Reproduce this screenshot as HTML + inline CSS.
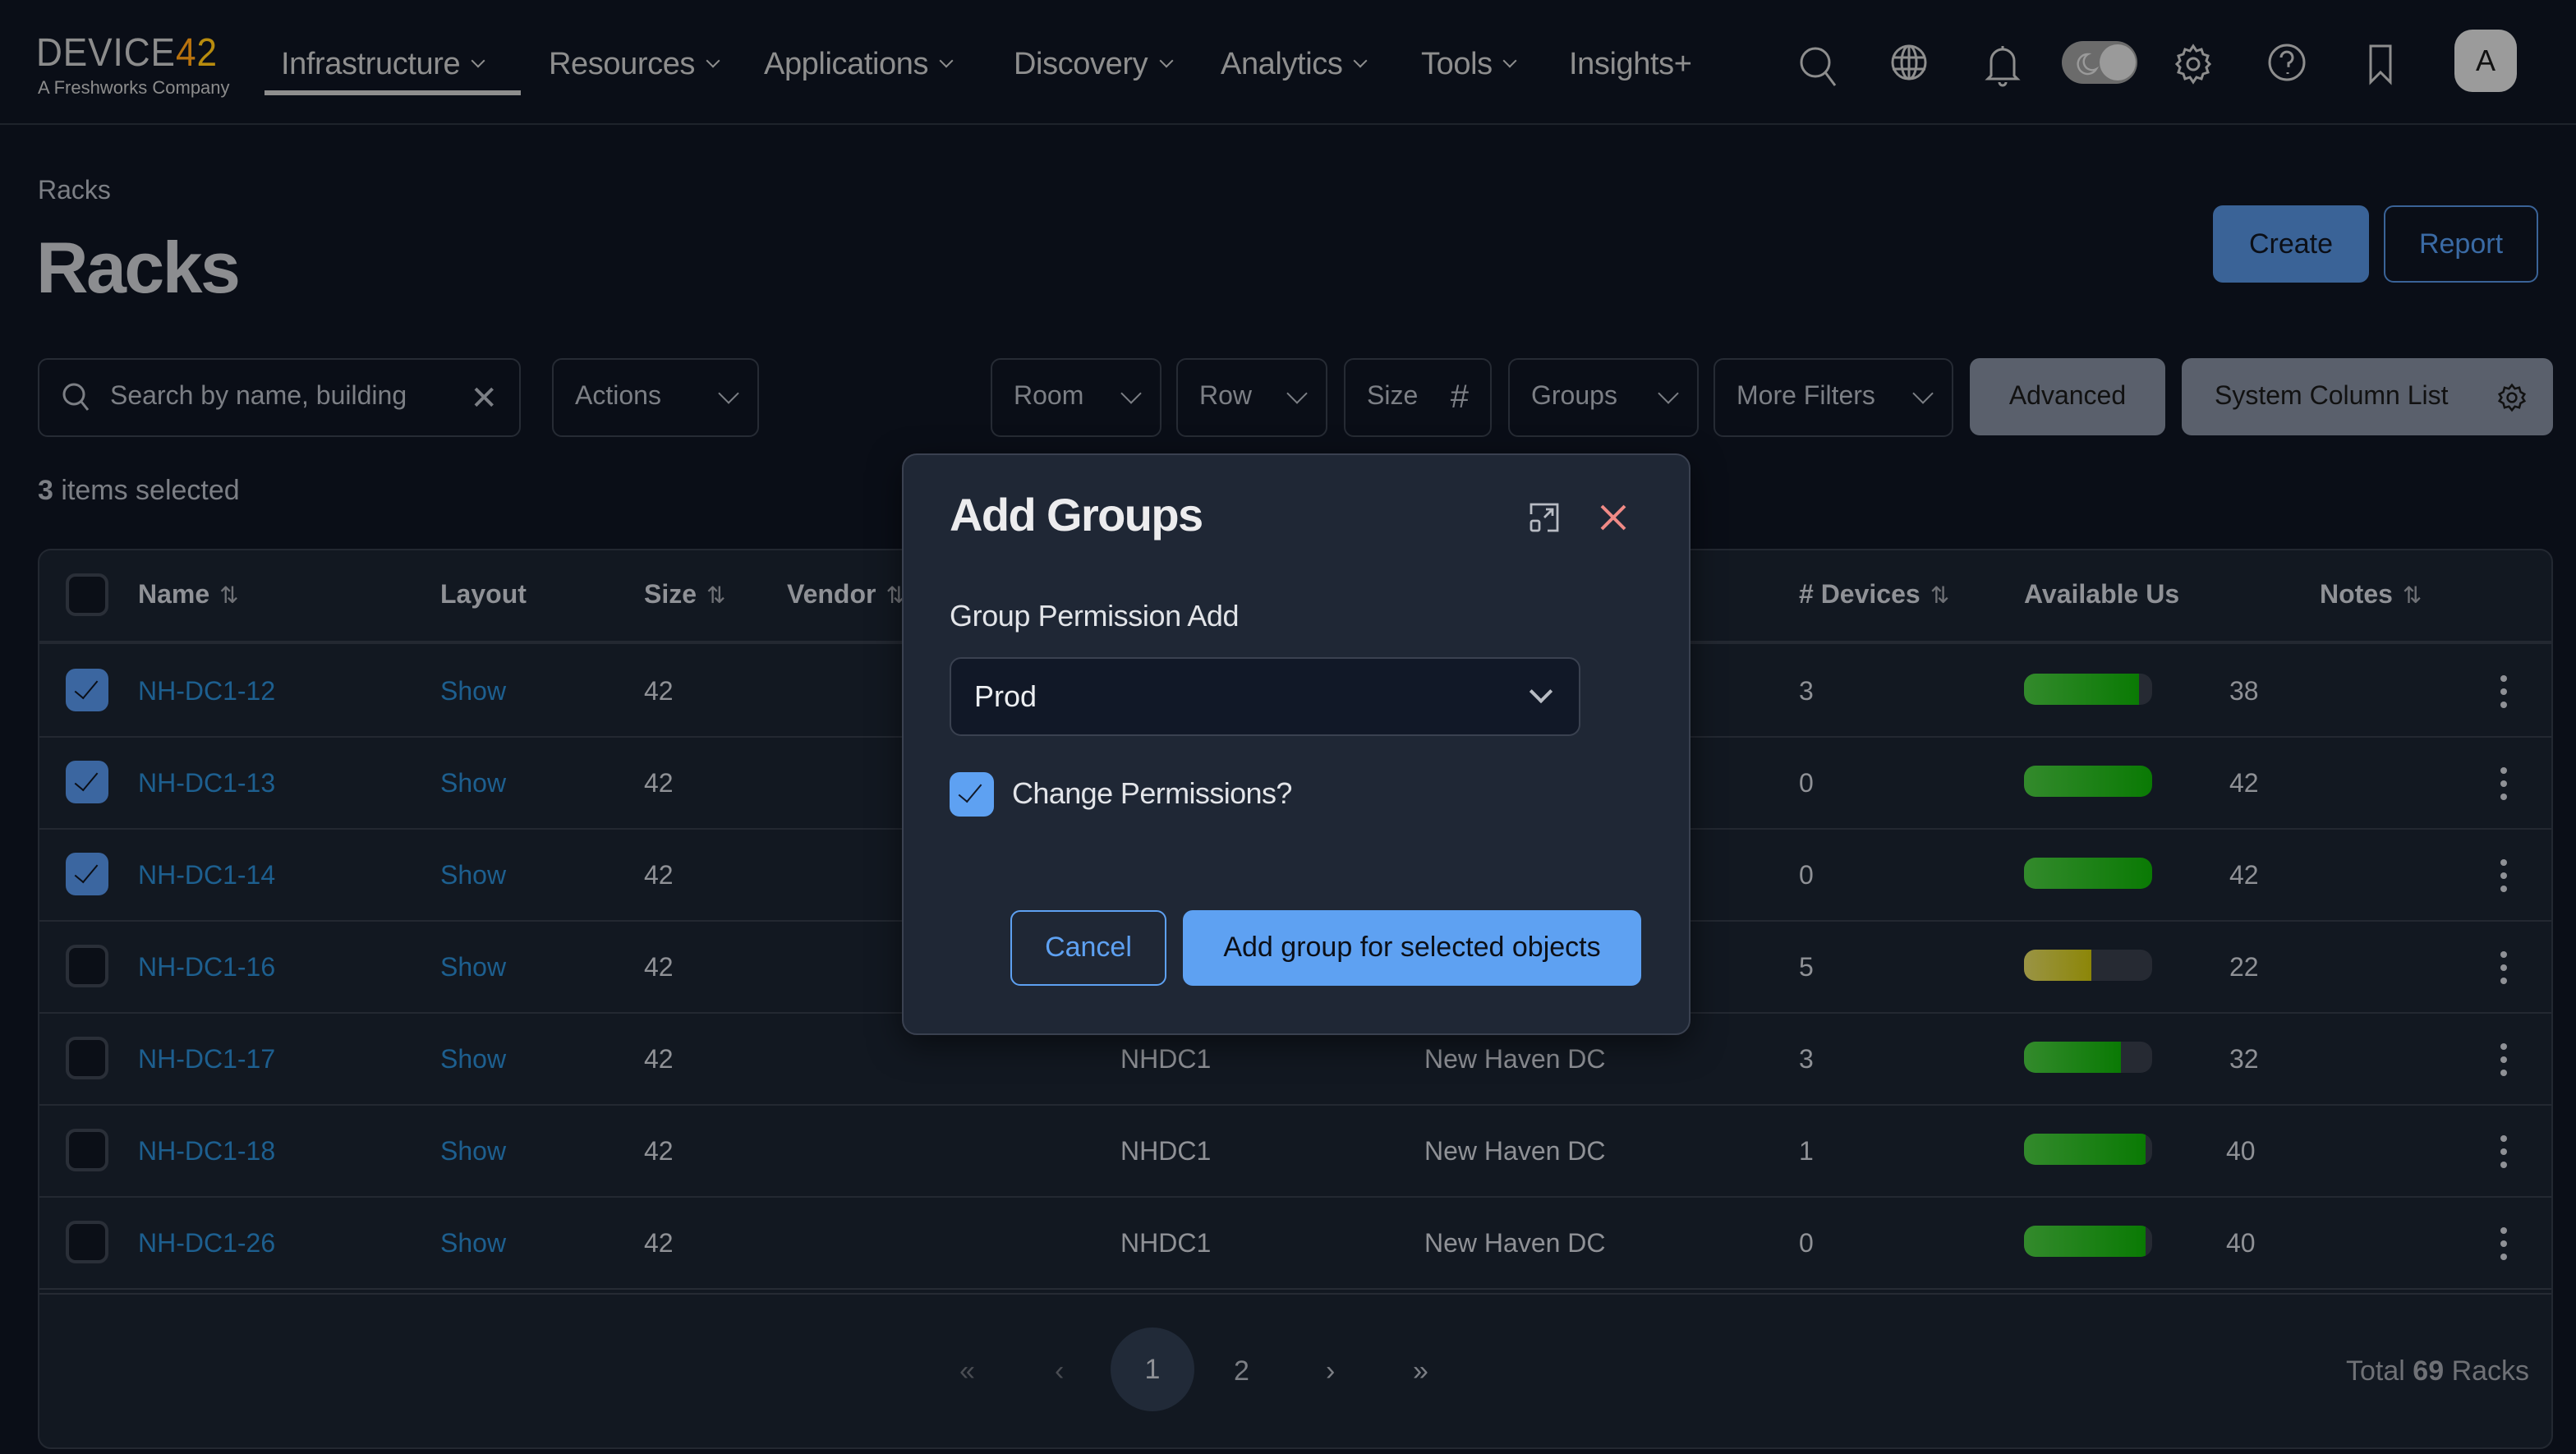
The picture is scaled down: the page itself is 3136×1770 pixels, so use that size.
<!DOCTYPE html>
<html><head><meta charset="utf-8"><style>
*{box-sizing:border-box;margin:0;padding:0}
html,body{width:3136px;height:1770px;overflow:hidden;background:#0a0e17}
#w{position:absolute;left:0;top:0;width:1568px;height:885px;transform:scale(2);transform-origin:0 0;font-family:"Liberation Sans",sans-serif;color:#8f9196;background:#0a0e17}
.a{position:absolute}
.nav{font-size:19px;color:#8e8e8e;top:29px;letter-spacing:-0.2px}
.chev{display:inline-block;width:6px;height:6px;border-right:1.4px solid #8e8e8e;border-bottom:1.4px solid #8e8e8e;transform:rotate(45deg);margin-left:8px;position:relative;top:-5px}
.box{border:1px solid #262b34;border-radius:6px;height:48px;top:218px;font-size:16px;color:#7c7f85;display:flex;align-items:center;padding:0 13px;justify-content:space-between}
.dchev{width:9px;height:9px;border-right:1.6px solid #7c7f85;border-bottom:1.6px solid #7c7f85;transform:rotate(45deg);margin-top:-6px}
.gbtn{background:#5a606c;border-radius:6px;top:218px;height:47px;color:#111;font-size:16px;display:flex;align-items:center;justify-content:center}
.row{left:24px;width:1529px;height:56px;border-top:1.5px solid #232831}
.cb{width:26px;height:26px;border-radius:6px;border:2px solid #2a2f38;background:#0b0f17;left:40px}
.cb.on{background:#3b66a0;border:none}
.cb.on:after{content:"";position:absolute;left:9px;top:4px;width:6px;height:13px;border-right:1.6px solid #0b0f17;border-bottom:1.6px solid #0b0f17;transform:rotate(40deg)}
.t{font-size:16px;color:#8f9196;margin-top:2px}
.lnk{font-size:16px;color:#1d5f8f;margin-top:2px}
.bar{width:78px;height:19px;border-radius:7px;background:#262a33;overflow:hidden;left:1232px}
.bar i{display:block;height:100%;background:linear-gradient(90deg,#338a2c,#0a7a04)}
.bar i.y{background:linear-gradient(90deg,#9a9445,#8c8608)}
.dots{left:1522px;width:4px}
.dots b{display:block;width:4px;height:4px;border-radius:50%;background:#8f9196;margin-bottom:4px}
.hd{font-size:16px;color:#8f9196;font-weight:bold;top:354px}
.sort{font-weight:normal;font-size:14px;color:#6f7176;margin-left:6px}
</style></head><body><div id="w">
<div class="a" style="left:0;top:0;width:1568px;height:76px;border-bottom:1px solid #1e232b"></div>
<div class="a" style="left:22px;top:19px;font-size:24px;letter-spacing:0.5px;color:#8c8c8c;line-height:28px;transform:scaleX(0.92);transform-origin:0 0">DEVICE<span style="color:#b8720e">4</span><span style="color:#b88c0e">2</span></div>
<div class="a" style="left:23px;top:48px;font-size:11px;color:#8c8c8c">A Freshworks Company</div>
<div class="a nav" style="left:171px">Infrastructure<span class="chev"></span></div>
<div class="a" style="left:161px;top:55px;width:156px;height:3px;background:#8e8e8e"></div>
<div class="a nav" style="left:334px">Resources<span class="chev"></span></div>
<div class="a nav" style="left:465px">Applications<span class="chev"></span></div>
<div class="a nav" style="left:617px">Discovery<span class="chev"></span></div>
<div class="a nav" style="left:743px">Analytics<span class="chev"></span></div>
<div class="a nav" style="left:865px">Tools<span class="chev"></span></div>
<div class="a nav" style="left:955px">Insights+</div>
<svg class="a" style="left:1090px;top:24px" width="460" height="34" viewBox="0 0 460 34" fill="none" stroke="#8e8e8e" stroke-width="1.5">
 <circle cx="15" cy="14" r="8.5"/><path d="M21 20l6 8"/>
 <circle cx="72" cy="14" r="10"/><ellipse cx="72" cy="14" rx="4.5" ry="10"/><path d="M62 11h20M62 18h20M72 4v20"/>
 <path d="M122 22V13a7 7 0 0 1 14 0v9l2 2h-18z"/><path d="M129 4v2M127 26a2 2 0 0 0 4 0"/>
 <rect x="165" y="1" width="46" height="26" rx="13" fill="#6b6b6b" stroke="none"/><circle cx="199" cy="14" r="11" fill="#9a9a9a" stroke="none"/>
 <path d="M181 9a6 6 0 1 0 5 9a5 5 0 0 1-5-9z" stroke="#9a9a9a" stroke-width="1.2"/>
 <circle cx="245" cy="15" r="3.5"/><path d="M245 4l2 3 3-1 1 3 3 1-1 3 2 2-2 2 1 3-3 1-1 3-3-1-2 3-2-3-3 1-1-3-3-1 1-3-2-2 2-2-1-3 3-1 1-3 3 1z"/>
 <circle cx="302" cy="14" r="10.5"/><path d="M298.5 11a3.5 3.5 0 1 1 4.5 3.4v2.5M302.5 20v1"/>
 <path d="M353 4h12v22l-6-6-6 6z"/>
</svg>
<div class="a" style="left:1494px;top:18px;width:38px;height:38px;border-radius:11px;background:#9b9b9b;color:#111;font-size:18px;display:flex;align-items:center;justify-content:center">A</div>

<div class="a" style="left:23px;top:108px;font-size:16px;color:#7c7f85">Racks</div>
<div class="a" style="left:22px;top:139px;font-size:44px;font-weight:bold;color:#8c8d90;letter-spacing:-1.3px">Racks</div>
<div class="a" style="left:1347px;top:125px;width:95px;height:47px;border-radius:6px;background:#3a6397;color:#0b0f17;font-size:17px;display:flex;align-items:center;justify-content:center">Create</div>
<div class="a" style="left:1451px;top:125px;width:94px;height:47px;border-radius:6px;border:1.5px solid #3a6397;color:#3a6aa4;font-size:17px;display:flex;align-items:center;justify-content:center">Report</div>

<div class="a box" style="left:23px;width:294px"><span style="display:flex;align-items:center"><svg width="20" height="20" viewBox="0 0 20 20" fill="none" stroke="#7c7f85" stroke-width="1.5"><circle cx="8" cy="8" r="6"/><path d="M12.5 12.5l4 5"/></svg><span style="margin-left:10px">Search by name, building</span></span><span style="font-size:20px">✕</span></div>
<div class="a box" style="left:336px;width:126px">Actions<span class="dchev"></span></div>
<div class="a box" style="left:603px;width:104px">Room<span class="dchev"></span></div>
<div class="a box" style="left:716px;width:92px">Row<span class="dchev"></span></div>
<div class="a box" style="left:818px;width:90px">Size<span style="font-size:20px">#</span></div>
<div class="a box" style="left:918px;width:116px">Groups<span class="dchev"></span></div>
<div class="a box" style="left:1043px;width:146px">More Filters<span class="dchev"></span></div>
<div class="a gbtn" style="left:1199px;width:119px">Advanced</div>
<div class="a gbtn" style="left:1328px;width:226px;justify-content:space-between;padding:0 16px 0 20px">System Column List<svg width="18" height="18" viewBox="0 0 20 20" fill="none" stroke="#111" stroke-width="1.4"><circle cx="10" cy="10" r="3"/><path d="M10 1.5l2 2.5 3-.8.8 3 2.7 1.5-1.5 2.3 1.5 2.3-2.7 1.5-.8 3-3-.8-2 2.5-2-2.5-3 .8-.8-3L1.5 12.3 3 10 1.5 7.7 4.2 6.2l.8-3 3 .8z"/></svg></div>
<div class="a" style="left:23px;top:289px;font-size:17px;color:#7c7f85"><b>3</b> items selected</div>

<div class="a" style="left:23px;top:334px;width:1531px;height:548px;background:#121821;border:1px solid #232831;border-radius:8px"></div>
<div class="a cb" style="top:349px"></div>
<div class="a hd" style="left:84px">Name<span class="sort">⇅</span></div>
<div class="a hd" style="left:268px">Layout</div>
<div class="a hd" style="left:392px">Size<span class="sort">⇅</span></div>
<div class="a hd" style="left:479px">Vendor<span class="sort">⇅</span></div>
<div class="a hd" style="left:1095px"># Devices<span class="sort">⇅</span></div>
<div class="a hd" style="left:1232px">Available Us</div>
<div class="a hd" style="left:1412px">Notes<span class="sort">⇅</span></div>
<div class="a" style="left:24px;top:390px;width:1529px;height:2px;background:#232831"></div>

<div class="a row" style="top:448px"></div><div class="a row" style="top:504px"></div><div class="a row" style="top:560px"></div><div class="a row" style="top:616px"></div><div class="a row" style="top:672px"></div><div class="a row" style="top:728px"></div>
<div class="a" style="left:24px;top:784px;width:1529px;height:4px;border-top:1.5px solid #262b34;border-bottom:1.5px solid #262b34"></div>

<div class="a cb on" style="top:407px"></div><div class="a lnk" style="left:84px;top:411px">NH-DC1-12</div><div class="a lnk" style="left:268px;top:411px">Show</div><div class="a t" style="left:392px;top:411px">42</div><div class="a t" style="left:1095px;top:411px">3</div><div class="a bar" style="top:410px"><i style="width:70px"></i></div><div class="a t" style="left:1357px;top:411px">38</div><div class="a dots" style="top:411px"><b></b><b></b><b></b></div>
<div class="a cb on" style="top:463px"></div><div class="a lnk" style="left:84px;top:467px">NH-DC1-13</div><div class="a lnk" style="left:268px;top:467px">Show</div><div class="a t" style="left:392px;top:467px">42</div><div class="a t" style="left:1095px;top:467px">0</div><div class="a bar" style="top:466px"><i style="width:78px"></i></div><div class="a t" style="left:1357px;top:467px">42</div><div class="a dots" style="top:467px"><b></b><b></b><b></b></div>
<div class="a cb on" style="top:519px"></div><div class="a lnk" style="left:84px;top:523px">NH-DC1-14</div><div class="a lnk" style="left:268px;top:523px">Show</div><div class="a t" style="left:392px;top:523px">42</div><div class="a t" style="left:1095px;top:523px">0</div><div class="a bar" style="top:522px"><i style="width:78px"></i></div><div class="a t" style="left:1357px;top:523px">42</div><div class="a dots" style="top:523px"><b></b><b></b><b></b></div>
<div class="a cb" style="top:575px"></div><div class="a lnk" style="left:84px;top:579px">NH-DC1-16</div><div class="a lnk" style="left:268px;top:579px">Show</div><div class="a t" style="left:392px;top:579px">42</div><div class="a t" style="left:1095px;top:579px">5</div><div class="a bar" style="top:578px"><i class="y" style="width:41px"></i></div><div class="a t" style="left:1357px;top:579px">22</div><div class="a dots" style="top:579px"><b></b><b></b><b></b></div>
<div class="a cb" style="top:631px"></div><div class="a lnk" style="left:84px;top:635px">NH-DC1-17</div><div class="a lnk" style="left:268px;top:635px">Show</div><div class="a t" style="left:392px;top:635px">42</div><div class="a t" style="left:682px;top:635px">NHDC1</div><div class="a t" style="left:867px;top:635px">New Haven DC</div><div class="a t" style="left:1095px;top:635px">3</div><div class="a bar" style="top:634px"><i style="width:59px"></i></div><div class="a t" style="left:1357px;top:635px">32</div><div class="a dots" style="top:635px"><b></b><b></b><b></b></div>
<div class="a cb" style="top:687px"></div><div class="a lnk" style="left:84px;top:691px">NH-DC1-18</div><div class="a lnk" style="left:268px;top:691px">Show</div><div class="a t" style="left:392px;top:691px">42</div><div class="a t" style="left:682px;top:691px">NHDC1</div><div class="a t" style="left:867px;top:691px">New Haven DC</div><div class="a t" style="left:1095px;top:691px">1</div><div class="a bar" style="top:690px"><i style="width:74px"></i></div><div class="a t" style="left:1355px;top:691px">40</div><div class="a dots" style="top:691px"><b></b><b></b><b></b></div>
<div class="a cb" style="top:743px"></div><div class="a lnk" style="left:84px;top:747px">NH-DC1-26</div><div class="a lnk" style="left:268px;top:747px">Show</div><div class="a t" style="left:392px;top:747px">42</div><div class="a t" style="left:682px;top:747px">NHDC1</div><div class="a t" style="left:867px;top:747px">New Haven DC</div><div class="a t" style="left:1095px;top:747px">0</div><div class="a bar" style="top:746px"><i style="width:74px"></i></div><div class="a t" style="left:1355px;top:747px">40</div><div class="a dots" style="top:747px"><b></b><b></b><b></b></div>

<div class="a" style="left:584px;top:825px;font-size:17px;color:#4a4d53">«</div>
<div class="a" style="left:642px;top:825px;font-size:17px;color:#4a4d53">‹</div>
<div class="a" style="left:676px;top:808px;width:51px;height:51px;border-radius:50%;background:#212a38;color:#8f9196;font-size:17px;display:flex;align-items:center;justify-content:center">1</div>
<div class="a" style="left:751px;top:825px;font-size:17px;color:#7c7f85">2</div>
<div class="a" style="left:807px;top:825px;font-size:17px;color:#7c7f85">›</div>
<div class="a" style="left:860px;top:825px;font-size:17px;color:#7c7f85">»</div>
<div class="a" style="left:1428px;top:825px;font-size:17px;color:#6f7176">Total <b>69</b> Racks</div>

<div class="a" style="left:549px;top:276px;width:480px;height:354px;background:#1f2735;border:1px solid #3a4150;border-radius:9px;box-shadow:0 6px 20px rgba(0,0,0,.5)"></div>
<div class="a" style="left:578px;top:298px;font-size:28px;font-weight:bold;color:#ececee;letter-spacing:-0.8px">Add Groups</div>
<svg class="a" style="left:929px;top:304px" width="22" height="22" viewBox="0 0 22 22" fill="none" stroke="#b8bcc4" stroke-width="1.4"><path d="M3 9V3h16v16h-6"/><rect x="3" y="13" width="5" height="6" rx="1"/><path d="M11 11l5-5M12 6h4v4"/></svg>
<svg class="a" style="left:972px;top:305px" width="20" height="20" viewBox="0 0 20 20" stroke="#f08a86" stroke-width="2"><path d="M3 3l14 14M17 3L3 17"/></svg>
<div class="a" style="left:578px;top:365px;font-size:18px;color:#e2e4e8;letter-spacing:-0.2px">Group Permission Add</div>
<div class="a" style="left:578px;top:400px;width:384px;height:48px;background:#111827;border:1.5px solid #3a4150;border-radius:7px;padding:0 14px;display:flex;align-items:center;justify-content:space-between;font-size:18px;color:#eceef1">Prod<span style="width:10px;height:10px;border-right:2px solid #b8bcc4;border-bottom:2px solid #b8bcc4;transform:rotate(45deg);margin-top:-6px;margin-right:4px"></span></div>
<div class="a" style="left:578px;top:470px;width:27px;height:27px;border-radius:6px;background:#5ea1f2"></div>
<div class="a" style="left:587px;top:474px;width:7px;height:14px;border-right:1.8px solid #111827;border-bottom:1.8px solid #111827;transform:rotate(40deg)"></div>
<div class="a" style="left:616px;top:473px;font-size:18px;color:#e2e4e8;letter-spacing:-0.3px">Change Permissions?</div>
<div class="a" style="left:615px;top:554px;width:95px;height:46px;border:1.5px solid #5ea1f2;border-radius:6px;color:#5ea1f2;font-size:17px;display:flex;align-items:center;justify-content:center">Cancel</div>
<div class="a" style="left:720px;top:554px;width:279px;height:46px;background:#5ea1f2;border-radius:6px;color:#0b0f17;font-size:17px;display:flex;align-items:center;justify-content:center">Add group for selected objects</div>
</div></body></html>
